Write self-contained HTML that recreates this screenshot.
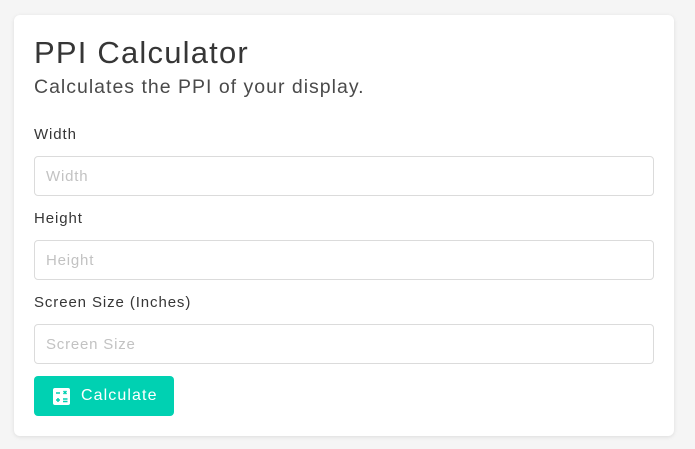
<!DOCTYPE html>
<html><head><style>
body{margin:0;background:#f5f5f5;font-family:"Liberation Sans",sans-serif;width:695px;height:449px;overflow:hidden}
.card{position:absolute;left:14px;top:15px;width:660px;height:421px;background:#fff;border-radius:6px;box-shadow:0 1px 4px rgba(0,0,0,.1)}
.t{position:absolute;left:20px;top:20px;font-size:31px;color:#363636;letter-spacing:1.2px}
.s{position:absolute;left:20px;top:61px;font-size:19.5px;color:#4a4a4a;letter-spacing:1px}
.l{position:absolute;left:20px;font-size:15px;color:#363636;letter-spacing:0.9px}
.i{position:absolute;left:20px;height:38px;border:1px solid #dbdbdb;border-radius:4px;font-size:15px;color:#c2c2c2;line-height:40px;padding-left:11px;width:607px;letter-spacing:0.8px}
.b{position:absolute;left:20px;top:361px;width:140px;height:40px;background:#00d1b2;border-radius:4px;color:#fff;font-size:16px;line-height:40px;letter-spacing:1.1px}
.ic{position:absolute;left:19px;top:12px;width:17px;height:17px;background:#fff;border-radius:2px}
.ic svg{display:block}
</style></head><body>
<div class="card">
<div class="t">PPI Calculator</div>
<div class="s">Calculates the PPI of your display.</div>
<div class="l" style="top:111px">Width</div>
<div class="i" style="top:141px">Width</div>
<div class="l" style="top:195px">Height</div>
<div class="i" style="top:225px">Height</div>
<div class="l" style="top:279px">Screen Size (Inches)</div>
<div class="i" style="top:309px">Screen Size</div>
<div class="b"><div class="ic"><svg width="17" height="17" viewBox="0 0 17 17" stroke="#00d1b2" stroke-width="1.5" fill="none"><path d="M3 5h4M10.5 3l3 3M13.5 3l-3 3M3 12h4M5 10v4M10 11h4.5M10 13.5h4.5"/></svg></div><span style="position:absolute;left:47px">Calculate</span></div>
</div>
</body></html>
